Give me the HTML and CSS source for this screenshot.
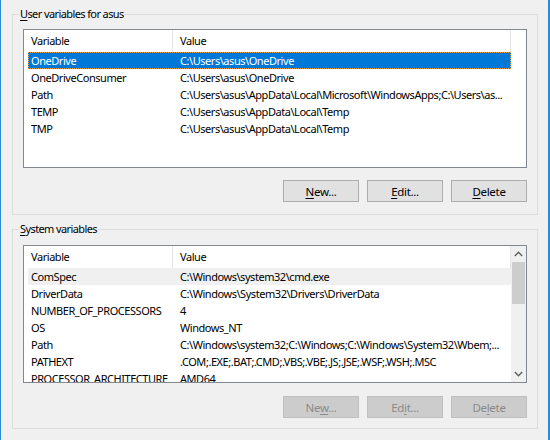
FILE: index.html
```html
<!DOCTYPE html>
<html>
<head>
<meta charset="utf-8">
<link rel="stylesheet" href="styles.css">
</head>
<body>
<div class="window">
  <fieldset class="group group-user">
    <legend><u>U</u>ser variables for asus</legend>
    <div class="list list-user">
      <div class="list-body">
        <div class="header">
          <div class="hcell">Variable</div>
          <div class="hcell">Value</div>
        </div>
        <div class="row selected"><span>OneDrive</span><span>C:\Users\asus\OneDrive</span></div>
        <div class="row"><span>OneDriveConsumer</span><span>C:\Users\asus\OneDrive</span></div>
        <div class="row"><span>Path</span><span>C:\Users\asus\AppData\Local\Microsoft\WindowsApps;C:\Users\as...</span></div>
        <div class="row"><span>TEMP</span><span>C:\Users\asus\AppData\Local\Temp</span></div>
        <div class="row"><span>TMP</span><span>C:\Users\asus\AppData\Local\Temp</span></div>
      </div>
    </div>
    <div class="buttons">
      <button class="btn"><u>N</u>ew...</button>
      <button class="btn"><u>E</u>dit...</button>
      <button class="btn"><u>D</u>elete</button>
    </div>
  </fieldset>

  <fieldset class="group group-system">
    <legend><u>S</u>ystem variables</legend>
    <div class="list list-system">
      <div class="list-body">
        <div class="header">
          <div class="hcell">Variable</div>
          <div class="hcell">Value</div>
        </div>
        <div class="row inactive"><span>ComSpec</span><span>C:\Windows\system32\cmd.exe</span></div>
        <div class="row"><span>DriverData</span><span>C:\Windows\System32\Drivers\DriverData</span></div>
        <div class="row"><span>NUMBER_OF_PROCESSORS</span><span>4</span></div>
        <div class="row"><span>OS</span><span>Windows_NT</span></div>
        <div class="row"><span>Path</span><span>C:\Windows\system32;C:\Windows;C:\Windows\System32\Wbem;...</span></div>
        <div class="row"><span>PATHEXT</span><span>.COM;.EXE;.BAT;.CMD;.VBS;.VBE;.JS;.JSE;.WSF;.WSH;.MSC</span></div>
        <div class="row"><span>PROCESSOR_ARCHITECTURE</span><span>AMD64</span></div>
      </div>
      <div class="scrollbar">
        <div class="sb-btn">
          <svg width="9" height="6" viewBox="0 0 9 6"><polyline points="0.8,5 4.5,1.3 8.2,5" fill="none" stroke="#606060" stroke-width="1.4"/></svg>
        </div>
        <div class="sb-track"><div class="sb-thumb"></div></div>
        <div class="sb-btn">
          <svg width="9" height="6" viewBox="0 0 9 6"><polyline points="0.8,1 4.5,4.7 8.2,1" fill="none" stroke="#606060" stroke-width="1.4"/></svg>
        </div>
      </div>
    </div>
    <div class="buttons">
      <button class="btn" disabled>Ne<u>w</u>...</button>
      <button class="btn" disabled>Ed<u>i</u>t...</button>
      <button class="btn" disabled>De<u>l</u>ete</button>
    </div>
  </fieldset>
</div>
</body>
</html>
```

FILE: styles.css
```css
html, body {
  margin: 0;
  padding: 0;
  background: #f0f0f0;
}

body {
  font-family: "Noto Sans", "Open Sans", "Liberation Sans", sans-serif;
  font-size: 11px;
  letter-spacing: -0.45px;
  color: #000;
}

.window {
  box-sizing: border-box;
  width: 550px;
  height: 440px;
  border-left: 1px solid #2d89d8;
  border-right: 2px solid #2d89d8;
  padding: 6px 0 0 11px;
  overflow: hidden;
}

.group {
  box-sizing: border-box;
  width: 526px;
  margin: 0;
  border: 1px solid #dcdcdc;
  padding: 7px 10px 12px 10px;
  min-width: 0;
}

.group-system {
  margin-top: 6px;
  padding-top: 8px;
  padding-bottom: 10px;
}

legend {
  padding: 0 1px;
  margin-left: -4px;
  line-height: 16px;
  height: 16px;
  font-size: 11px;
  letter-spacing: -0.6px;
}

u {
  text-decoration: underline;
  text-underline-offset: 2px;
}

.list {
  box-sizing: border-box;
  border: 1px solid #828790;
  background: #fff;
  display: flex;
  overflow: hidden;
}

.list-user { height: 139px; }
.list-system { height: 138px; }

.list-body {
  flex: 1;
  min-width: 0;
  overflow: hidden;
}

.header {
  display: grid;
  grid-template-columns: 149px 338px;
  height: 22px;
}

.hcell {
  box-sizing: border-box;
  border-right: 1px solid #e5e5e5;
  padding-left: 7px;
  line-height: 22px;
  white-space: nowrap;
}

.row {
  box-sizing: border-box;
  display: grid;
  grid-template-columns: 152px 1fr;
  height: 17px;
  line-height: 17px;
  margin-left: 4px;
  width: 483px;
  white-space: nowrap;
}

.row span {
  padding-left: 3px;
}

.row span + span {
  padding-left: 0;
  overflow: hidden;
}

.row.selected {
  background: #0078d7;
  color: #fff;
  outline: 1px dotted #f0a040;
  outline-offset: -1px;
}

.row.inactive {
  background: #f0f0f0;
}

.scrollbar {
  width: 15px;
  background: #f0f0f0;
  display: flex;
  flex-direction: column;
}

.sb-btn {
  height: 16px;
  display: flex;
  align-items: center;
  justify-content: center;
}

.sb-track {
  flex: 1;
  padding: 0 1px;
}

.sb-thumb {
  height: 42px;
  background: #cdcdcd;
}

.buttons {
  display: flex;
  justify-content: flex-end;
  gap: 8px;
  margin-top: 12px;
}

.group-system .buttons {
  margin-top: 13px;
}

.btn {
  box-sizing: border-box;
  width: 76px;
  height: 22px;
  margin: 0;
  padding: 0;
  background: #e1e1e1;
  border: 1px solid #adadad;
  border-radius: 0;
  font-family: inherit;
  font-size: 11.5px;
  letter-spacing: -0.3px;
  color: #000;
}

.btn:disabled {
  background: #cccccc;
  border-color: #bfbfbf;
  color: #8a8a8a;
}
```
